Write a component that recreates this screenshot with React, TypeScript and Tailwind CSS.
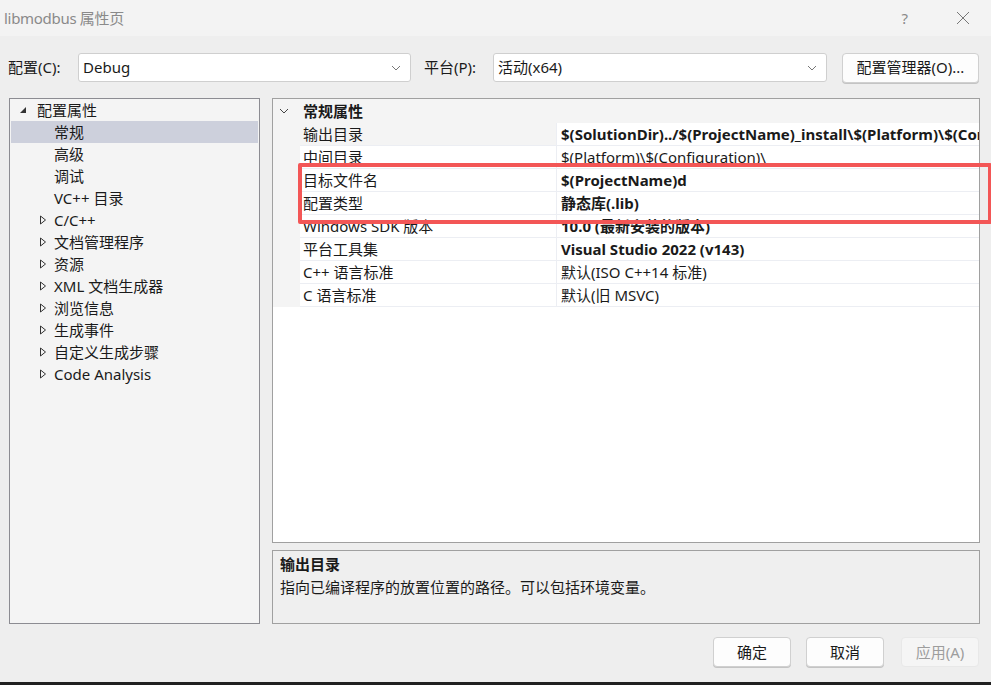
import React from 'react';

const font = { fontFamily: '"Noto Sans", "Noto Sans CJK SC", sans-serif' };

const treeItems = [
    { label: '常规', child: true, selected: true },
    { label: '高级', child: true },
    { label: '调试', child: true },
    { label: 'VC++ 目录', child: true },
    { label: 'C/C++' },
    { label: '文档管理程序' },
    { label: '资源' },
    { label: 'XML 文档生成器' },
    { label: '浏览信息' },
    { label: '生成事件' },
    { label: '自定义生成步骤' },
    { label: 'Code Analysis' },
];

const props = [
    { name: '输出目录', value: '$(SolutionDir)../$(ProjectName)_install\\$(Platform)\\$(Configuration)\\', bold: true, selected: true },
    { name: '中间目录', value: '$(Platform)\\$(Configuration)\\' },
    { name: '目标文件名', value: '$(ProjectName)d', bold: true },
    { name: '配置类型', value: '静态库(.lib)', bold: true },
    { name: 'Windows SDK 版本', value: '10.0 (最新安装的版本)', bold: true },
    { name: '平台工具集', value: 'Visual Studio 2022 (v143)', bold: true },
    { name: 'C++ 语言标准', value: '默认(ISO C++14 标准)' },
    { name: 'C 语言标准', value: '默认(旧 MSVC)' },
];

const Chevron = ({ className = '' }: { className?: string }) => (
    <svg width="10" height="6" viewBox="0 0 10 6" className={className}>
        <path d="M1 1 L5 5 L9 1" fill="none" stroke="currentColor" strokeWidth="1" />
    </svg>
);

const Dropdown = ({ value, width }: { value: string; width: string }) => (
    <div className={`${width} h-[29px] bg-white border border-[#cfcfcf] rounded-[3px] flex items-center justify-between pl-[4px] pr-[9px] text-[15px] text-[#1a1a1a]`}>
        <span>{value}</span>
        <Chevron className="text-[#777]" />
    </div>
);

const Btn = ({ label, disabled }: { label: string; disabled?: boolean }) => (
    <div className={`w-[78px] h-[30px] rounded-[4px] border flex items-center justify-center text-[15px] ${disabled ? 'bg-[#f5f5f5] border-[#e8e8e8] text-[#9d9d9d]' : 'bg-[#fdfdfd] border-[#d0d0d0] text-[#1a1a1a] shadow-[0_1px_0_#c4c4c4]'}`}>
        {label}
    </div>
);

export default function App() {
    return (
        <div style={font} className="w-[991px] h-[685px] bg-[#eeeeee] flex flex-col overflow-hidden text-[#1a1a1a]">
            {/* title bar */}
            <div className="h-[36px] bg-[#f3f3f3] flex items-center pl-[4px] shrink-0">
                <span className="text-[15px] text-[#8a8a8a] tracking-[-0.3px]">libmodbus 属性页</span>
                <div className="flex-1" />
                <span className="text-[15px] text-[#8a8a8a] mr-[48px]">?</span>
                <svg width="14" height="14" viewBox="0 0 14 14" className="mr-[21px] text-[#777]">
                    <path d="M1 1 L13 13 M13 1 L1 13" stroke="currentColor" strokeWidth="1" />
                </svg>
            </div>

            {/* config row */}
            <div className="flex items-center mt-[17px] pl-[8px] h-[29px] shrink-0">
                <span className="text-[15px] w-[70px]">配置(C):</span>
                <Dropdown value="Debug" width="w-[333px]" />
                <span className="text-[15px] ml-[13px] w-[69px]">平台(P):</span>
                <Dropdown value="活动(x64)" width="w-[334px]" />
                <div className="ml-[15px] w-[137px] h-[30px] bg-[#fdfdfd] border border-[#d0d0d0] rounded-[4px] flex items-center justify-center text-[15px] shadow-[0_1px_0_#c4c4c4]">
                    配置管理器(O)...
                </div>
            </div>

            {/* main */}
            <div className="flex mt-[16px] pl-[9px] h-[526px] shrink-0">
                {/* tree */}
                <div className="w-[251px] h-[526px] bg-[#f4f4f4] border border-[#8c8c92] flex flex-col px-[1px] text-[15px]">
                    <div className="h-[22px] flex items-center">
                        <svg width="8" height="8" viewBox="0 0 8 8" className="ml-[8px] mr-[10px]">
                            <path d="M7 1 L7 7 L1 7 Z" fill="#333" />
                        </svg>
                        <span>配置属性</span>
                    </div>
                    {treeItems.map(t => (
                        <div key={t.label} className={`h-[22px] flex items-center ${t.selected ? 'bg-[#cdd0dc]' : ''}`}>
                            {t.child ? (
                                <span className="ml-[43px]" />
                            ) : (
                                <svg width="8" height="10" viewBox="0 0 8 10" className="ml-[28px] mr-[7px]">
                                    <path d="M1.5 1 L6.5 5 L1.5 9 Z" fill="none" stroke="#333" strokeWidth="1" />
                                </svg>
                            )}
                            <span>{t.label}</span>
                        </div>
                    ))}
                </div>

                {/* right column */}
                <div className="ml-[12px] w-[708px] flex flex-col">
                    <div className="relative h-[445px] bg-white border border-[#a0a0a0] flex flex-col overflow-visible">
                        <div className="h-[24px] bg-[#f4f4f4] flex items-center text-[15px]">
                            <Chevron className="ml-[6px] mr-[14px] text-[#444]" />
                            <span className="font-bold">常规属性</span>
                        </div>
                        <div className="flex flex-col overflow-hidden">
                            {props.map(p => (
                                <div key={p.name} className="h-[23px] flex">
                                    <div className="w-[27px] bg-[#f4f4f4] shrink-0" />
                                    <div className={`w-[257px] shrink-0 border-b border-r border-[#eceef3] flex items-center pl-[3px] text-[15px] ${p.selected ? 'bg-[#f4f4f4]' : ''}`}>
                                        {p.name}
                                    </div>
                                    <div className={`flex-1 min-w-0 border-b border-[#eceef3] flex items-center pl-[4px] text-[15px] whitespace-nowrap overflow-hidden ${p.bold ? 'font-bold' : ''}`}>
                                        {p.value}
                                    </div>
                                </div>
                            ))}
                        </div>
                        {/* annotation */}
                        <div className="absolute left-[25px] top-[64px] w-[694px] h-[61px] border-[4px] border-[#f35656] rounded-[2px]" />
                    </div>
                    <div className="mt-[7px] h-[74px] bg-[#efefef] border border-[#a0a0a0] px-[7px] pt-[2px] text-[15px]">
                        <div className="font-bold leading-[22px]">输出目录</div>
                        <div className="leading-[22px] mt-[1px]">指向已编译程序的放置位置的路径。可以包括环境变量。</div>
                    </div>
                </div>
            </div>

            {/* buttons */}
            <div className="flex justify-end pr-[12px] mt-[13px] shrink-0">
                <Btn label="确定" />
                <div className="w-[15px]" />
                <Btn label="取消" />
                <div className="w-[17px]" />
                <Btn label="应用(A)" disabled />
            </div>

            <div className="flex-1" />
            <div className="h-[3px] bg-[#202020] shrink-0" />
        </div>
    );
}
